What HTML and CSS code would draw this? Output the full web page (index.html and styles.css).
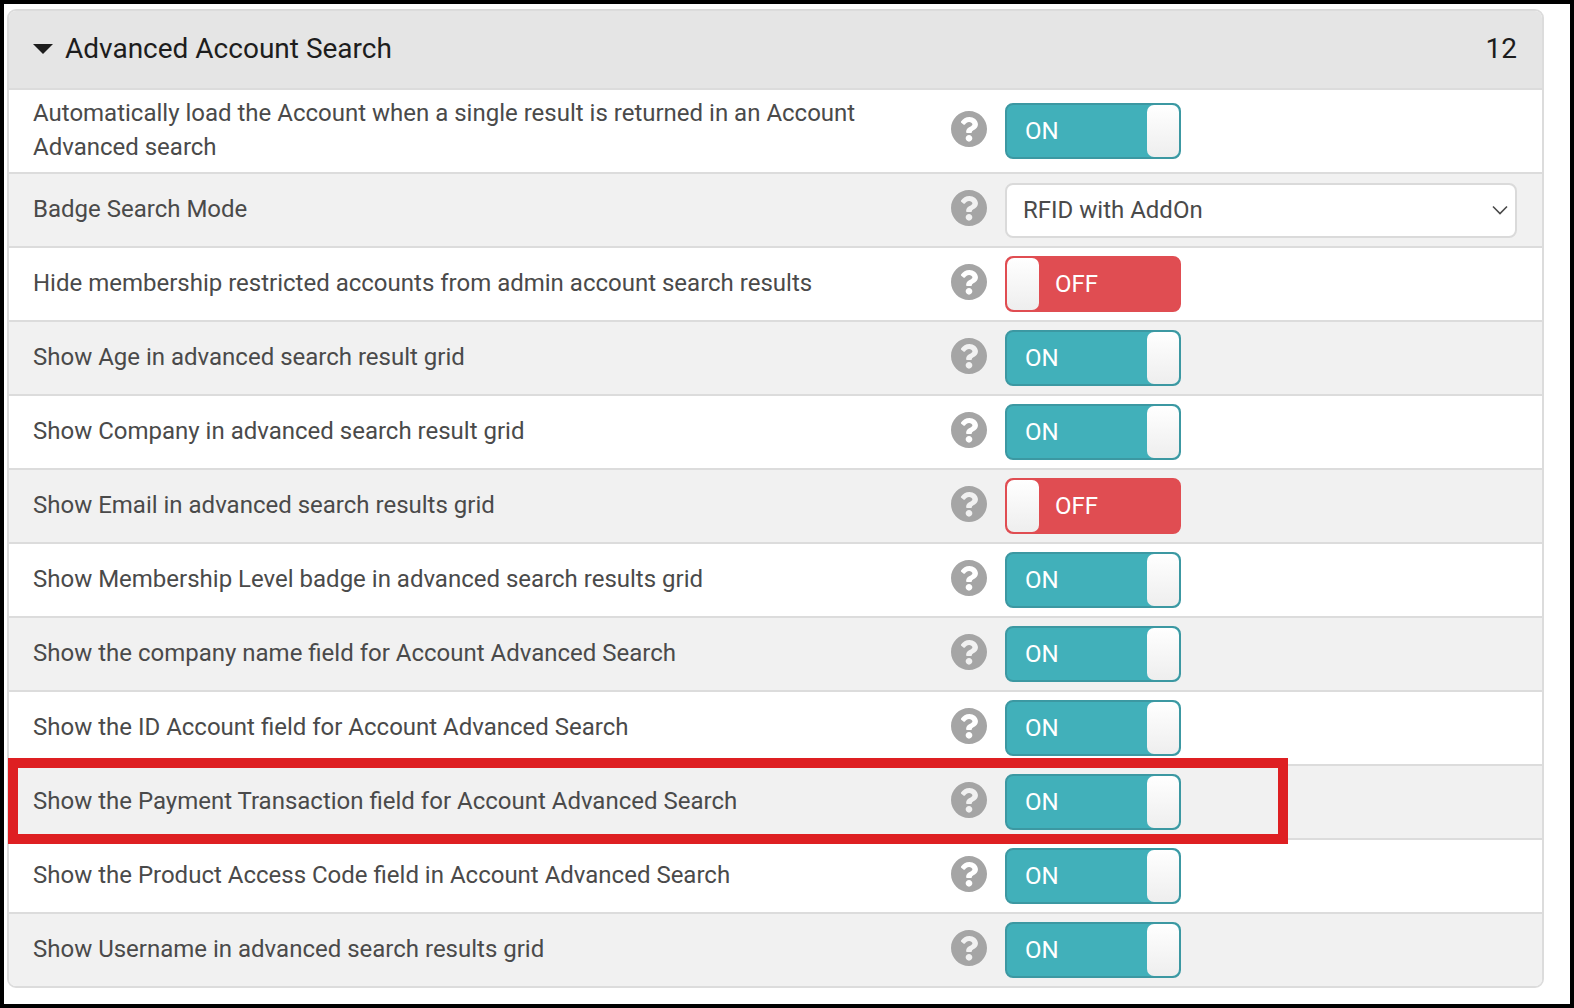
FILE: index.html
```html
<!DOCTYPE html>
<html lang="en">
<head>
    <meta charset="UTF-8">
    <title>Advanced Account Search</title>
    <link rel="stylesheet" href="styles.css">
</head>
<body>
    <svg class="defs" width="0" height="0">
        <symbol id="help" viewBox="8 8 496 496">
            <path d="M504 256c0 136.997-111.043 248-248 248S8 392.997 8 256C8 119.083 119.043 8 256 8s248 111.083 248 248zM262.655 90c-54.497 0-89.255 22.957-116.549 63.758-3.536 5.286-2.353 12.415 2.715 16.258l34.699 26.31c5.205 3.947 12.621 3.008 16.665-2.122 17.864-22.658 30.113-35.797 57.303-35.797 20.429 0 45.698 13.148 45.698 32.958 0 14.976-12.363 22.667-32.534 33.976C247.128 238.528 216 254.941 216 296v4c0 6.627 5.373 12 12 12h56c6.627 0 12-5.373 12-12v-1.333c0-28.462 83.186-29.647 83.186-106.667 0-58.002-60.165-102-116.531-102zM256 338c-25.365 0-46 20.635-46 46 0 25.364 20.635 46 46 46s46-20.636 46-46c0-25.365-20.635-46-46-46z"/>
        </symbol>
    </svg>

    <div class="panel">
        <div class="panel-head">
            <span class="caret"></span>
            <span class="panel-title">Advanced Account Search</span>
            <span class="panel-count">12</span>
        </div>

        <div class="row row-tall">
            <div class="label">Automatically load the Account when a single result is returned in an Account Advanced search</div>
            <svg class="help"><use href="#help"/></svg>
            <div class="toggle on"><span class="toggle-text">ON</span><span class="knob"></span></div>
        </div>
        <div class="row">
            <div class="label">Badge Search Mode</div>
            <svg class="help"><use href="#help"/></svg>
            <div class="select">
                <span>RFID with AddOn</span>
                <svg class="chevron" viewBox="0 0 16 10"><path d="M1 1.5l7 7 7-7"/></svg>
            </div>
        </div>
        <div class="row">
            <div class="label">Hide membership restricted accounts from admin account search results</div>
            <svg class="help"><use href="#help"/></svg>
            <div class="toggle off"><span class="knob"></span><span class="toggle-text">OFF</span></div>
        </div>
        <div class="row">
            <div class="label">Show Age in advanced search result grid</div>
            <svg class="help"><use href="#help"/></svg>
            <div class="toggle on"><span class="toggle-text">ON</span><span class="knob"></span></div>
        </div>
        <div class="row">
            <div class="label">Show Company in advanced search result grid</div>
            <svg class="help"><use href="#help"/></svg>
            <div class="toggle on"><span class="toggle-text">ON</span><span class="knob"></span></div>
        </div>
        <div class="row">
            <div class="label">Show Email in advanced search results grid</div>
            <svg class="help"><use href="#help"/></svg>
            <div class="toggle off"><span class="knob"></span><span class="toggle-text">OFF</span></div>
        </div>
        <div class="row">
            <div class="label">Show Membership Level badge in advanced search results grid</div>
            <svg class="help"><use href="#help"/></svg>
            <div class="toggle on"><span class="toggle-text">ON</span><span class="knob"></span></div>
        </div>
        <div class="row">
            <div class="label">Show the company name field for Account Advanced Search</div>
            <svg class="help"><use href="#help"/></svg>
            <div class="toggle on"><span class="toggle-text">ON</span><span class="knob"></span></div>
        </div>
        <div class="row">
            <div class="label">Show the ID Account field for Account Advanced Search</div>
            <svg class="help"><use href="#help"/></svg>
            <div class="toggle on"><span class="toggle-text">ON</span><span class="knob"></span></div>
        </div>
        <div class="row">
            <div class="label">Show the Payment Transaction field for Account Advanced Search</div>
            <svg class="help"><use href="#help"/></svg>
            <div class="toggle on"><span class="toggle-text">ON</span><span class="knob"></span></div>
        </div>
        <div class="row">
            <div class="label">Show the Product Access Code field in Account Advanced Search</div>
            <svg class="help"><use href="#help"/></svg>
            <div class="toggle on"><span class="toggle-text">ON</span><span class="knob"></span></div>
        </div>
        <div class="row row-last">
            <div class="label">Show Username in advanced search results grid</div>
            <svg class="help"><use href="#help"/></svg>
            <div class="toggle on"><span class="toggle-text">ON</span><span class="knob"></span></div>
        </div>
    </div>

    <div class="callout"></div>
</body>
</html>
```

FILE: styles.css
```css
* {
    box-sizing: border-box;
}

html, body {
    margin: 0;
    padding: 0;
}

body {
    position: relative;
    width: 1574px;
    height: 1008px;
    padding: 5px 26px 17px 3px;
    border: 4px solid #000;
    background: #fff;
    font-family: Roboto, "Liberation Sans", sans-serif;
    color: #4a4a4a;
    overflow: hidden;
}

.defs {
    position: absolute;
}

.panel {
    border: 2px solid #dcdcdc;
    border-radius: 9px;
    overflow: hidden;
}

.panel-head {
    display: flex;
    align-items: center;
    height: 79px;
    padding: 0 25px 2px 24px;
    background: #e5e5e5;
    border-bottom: 2px solid #dcdcdc;
    color: #1d1d1d;
    font-size: 28px;
}

.caret {
    width: 0;
    height: 0;
    margin-right: 12px;
    border-left: 10px solid transparent;
    border-right: 10px solid transparent;
    border-top: 10px solid #1d1d1d;
}

.panel-title {
    flex: 1;
}

.row {
    display: grid;
    grid-template-columns: 942px 54px 1fr;
    align-items: center;
    height: 74px;
    border-bottom: 2px solid #dcdcdc;
    font-size: 24px;
}

.row:nth-of-type(even) {
    background: #fff;
}

.row:nth-of-type(odd) {
    background: #f1f1f1;
}

.row-tall {
    height: 84px;
}

.row-last {
    height: 72px;
    border-bottom: 0;
}

.label {
    padding: 0 60px 3px 24px;
    line-height: 34px;
}

.help {
    width: 36px;
    height: 36px;
    margin-bottom: 4px;
    fill: #a5a5a5;
}

.toggle {
    display: flex;
    align-items: center;
    width: 176px;
    height: 56px;
    border: 2px solid;
    border-radius: 8px;
    color: #fff;
    font-size: 24px;
}

.toggle.on {
    justify-content: space-between;
    background: #41b0ba;
    border-color: #3c98a2;
}

.toggle.off {
    background: #e04d52;
    border-color: #e04d52;
}

.toggle-text {
    padding-left: 18px;
}

.toggle.off .toggle-text {
    padding-left: 16px;
}

.knob {
    width: 32px;
    height: 52px;
    border-radius: 7px;
    background: linear-gradient(180deg, #fff 0%, #eeeeee 100%);
}

.select {
    display: flex;
    align-items: center;
    justify-content: space-between;
    width: 512px;
    height: 55px;
    padding: 0 7px 0 16px;
    background: #fff;
    border: 2px solid #dadada;
    border-radius: 8px;
}

.chevron {
    width: 16px;
    height: 10px;
    fill: none;
    stroke: #4a4a4a;
    stroke-width: 1.6;
}

.callout {
    position: absolute;
    left: 4px;
    top: 754px;
    width: 1280px;
    height: 86px;
    border: 10px solid #de1f22;
}
```
